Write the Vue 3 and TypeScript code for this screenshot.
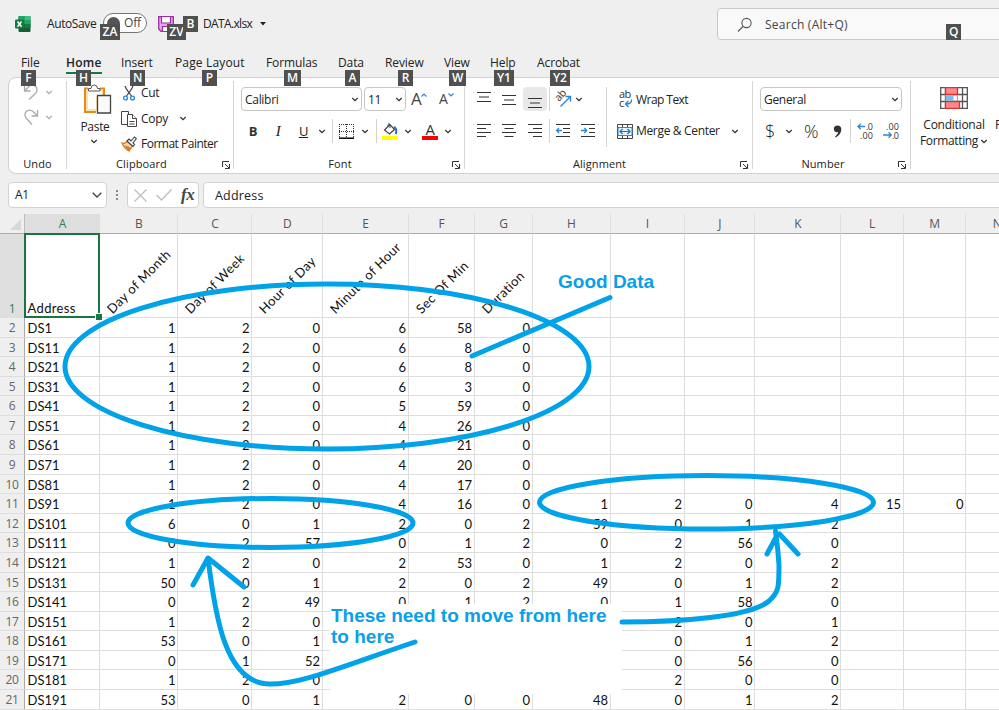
<script setup lang="ts">
interface Tab { name: string; key: string; keyLeft: number }
const tabs: Tab[] = [
  { name: 'File', key: 'F', keyLeft: 0 },
  { name: 'Home', key: 'H', keyLeft: 10 },
  { name: 'Insert', key: 'N', keyLeft: 9 },
  { name: 'Page Layout', key: 'P', keyLeft: 27 },
  { name: 'Formulas', key: 'M', keyLeft: 18 },
  { name: 'Data', key: 'A', keyLeft: 7 },
  { name: 'Review', key: 'R', keyLeft: 13 },
  { name: 'View', key: 'W', keyLeft: 5 },
  { name: 'Help', key: 'Y1', keyLeft: 4 },
  { name: 'Acrobat', key: 'Y2', keyLeft: 13 },
]
const columns: string[] = 'ABCDEFGHIJKLMN'.split('')
const headings: string[] = ['Address', 'Day of Month', 'Day of Week', 'Hour of Day', 'Minute of Hour', 'Sec Of Min', 'Duration']
const rows: string[][] = [
  'DS1 1 2 0 6 58 0', 'DS11 1 2 0 6 8 0', 'DS21 1 2 0 6 8 0', 'DS31 1 2 0 6 3 0',
  'DS41 1 2 0 5 59 0', 'DS51 1 2 0 4 26 0', 'DS61 1 2 0 4 21 0', 'DS71 1 2 0 4 20 0',
  'DS81 1 2 0 4 17 0', 'DS91 1 2 0 4 16 0 1 2 0 4 15 0', 'DS101 6 0 1 2 0 2 59 0 1 2',
  'DS111 0 2 57 0 1 2 0 2 56 0', 'DS121 1 2 0 2 53 0 1 2 0 2', 'DS131 50 0 1 2 0 2 49 0 1 2',
  'DS141 0 2 49 0 1 2 0 1 58 0', 'DS151 1 2 0 - - - - 2 0 1', 'DS161 53 0 1 - - - - 0 1 2',
  'DS171 0 1 52 - - - - 0 56 0', 'DS181 1 2 0 - - - - 2 0 0', 'DS191 53 0 1 2 0 0 48 0 1 2',
].map((line) => line.split(' ').map((v) => (v === '-' ? '' : v)))
</script>

<template>
  <div class="window">
    <header class="title">
      <svg class="logo" width="16" height="16" viewBox="0 0 16 16">
        <rect x="3.5" y="0" width="12" height="16" rx="1" fill="#185c37" />
        <path d="M4.500 0H9.500V8H3.500V1Q3.500 0 4.500 0Z" fill="#21a366" /><path d="M9.500 0H14.500Q15.500 0 15.500 1V4H9.500Z" fill="#33c481" />
        <path d="M9.500 4H15.500V8H9.500Z" fill="#21a366" /><path d="M3.500 8H9.500V12H3.500Z" fill="#107c41" /><path d="M9.500 8H15.500V12H9.500Z" fill="#107c41" />
        <rect x="0" y="3.500" width="9" height="9" rx="1" fill="#107c41" />
        <path d="M2.500 5.500L6.500 10.800M6.500 5.500L2.500 10.800" stroke="#fff" stroke-width="1.500" />
      </svg>
      <span class="autosave">AutoSave</span>
      <span class="toggle"><i></i><b>Off</b><kbd class="key za">ZA</kbd></span>
      <span class="save">
        <svg width="16" height="16" viewBox="0 0 16 16"><path d="M.7.700H15.300V15.300H3L.7 13Z" fill="#e6a8ec" stroke="#9a2ca8" stroke-width="1.300" /><path d="M3.500 1V7H12.500V1" fill="#fff" stroke="#9a2ca8" stroke-width="1.200" /><path d="M4.500 15V10.500H11.500V15" fill="#fff" stroke="#9a2ca8" stroke-width="1.200" /></svg>
        <kbd class="key zv">ZV</kbd><kbd class="key kb">B</kbd>
      </span>
      <span class="file">DATA.xlsx</span>
      <svg class="tri" width="6" height="4" viewBox="0 0 6 4"><path d="M0 0H6L3 3.500Z" fill="#222" /></svg>
      <div class="search">
        <svg width="16" height="16" viewBox="0 0 16 16" fill="none" stroke="#555" stroke-width="1.100"><circle cx="9.500" cy="6" r="4.600" /><path d="M6 9.500L1 14.500" /></svg>
        <span>Search (Alt+Q)</span><kbd class="key kq">Q</kbd>
      </div>
    </header>

    <nav class="tabs">
      <span v-for="t in tabs" :key="t.name" :class="{ active: t.name === 'Home', wide: t.name === 'Page Layout' }"><em>{{ t.name }}</em><kbd class="key" :style="{ left: t.keyLeft + 'px' }">{{ t.key }}</kbd></span>
    </nav>

    <section class="ribbon">
      <div class="group undo">
        <div class="undo-body">
          <svg width="16" height="16" viewBox="0 0 16 16" class="dim"><path d="M1.500 1V7H7.500M1.500 7L5 3.500C8-.5 14 1 14 6C14 8 13 9 12 10L6 15.500" /></svg><svg class="chev dim" width="8" height="5" viewBox="0 0 8 5"><path d="M1.300 1L4 3.600L6.700 1" /></svg>
          <svg width="16" height="16" viewBox="0 0 16 16" class="dim"><path d="M14.500 1V7H8.500M14.500 7L11 3.500C8-.5 2 1 2 6C2 8 3 9 4 10L9 15.500" /></svg><svg class="chev dim" width="8" height="5" viewBox="0 0 8 5"><path d="M1.300 1L4 3.600L6.700 1" /></svg>
        </div>
        <label>Undo</label>
      </div>

      <div class="group clipboard">
        <div class="clip-body">
          <div class="paste">
            <svg width="29" height="31" viewBox="0 0 29 31"><path d="M5 4.500H2V28H13" fill="none" stroke="#e8891c" stroke-width="2" /><path d="M3 6H21V13H14V27H3Z" fill="#fde2a8" /><path d="M5 7H19V12H13V25H5Z" fill="#fff" /><path d="M17 4.500H21V11" fill="none" stroke="#e8891c" stroke-width="2" /><path d="M5.500 7V4.500H8Q8 1 11.200 1T14.500 4.500H17V7Z" fill="#fff" stroke="#555" /><path d="M14.500 11.500H27.500V29H14.500Z" fill="#fafafa" stroke="#444" stroke-width="1.300" /></svg>
            <span>Paste</span>
            <svg class="chev" width="8" height="5" viewBox="0 0 8 5"><path d="M1.300 1L4 3.600L6.700 1" /></svg>
          </div>
          <div class="clip-list">
            <div><svg width="16" height="16" viewBox="0 0 16 16" fill="none"><path d="M4 1Q5 4 10.500 11M12 1Q11 4 5.500 11" stroke="#444" stroke-width="1.200" /><circle cx="4.500" cy="13" r="1.900" stroke="#2b88d8" stroke-width="1.400" /><circle cx="11.500" cy="13" r="1.900" stroke="#2b88d8" stroke-width="1.400" /></svg><span>Cut</span></div>
            <div><svg width="16" height="16" viewBox="0 0 16 16" fill="#fff" stroke="#444"><path d="M6 13.500H.5V.5H7.500V3" /><path d="M6.500 3.500H11.500L15.500 7.500V15.500H6.500Z" /><path d="M11.500 3.500V7.500H15.500M8.500 10.500H13.500M8.500 13H13.500" /></svg><span>Copy</span><svg class="chev" width="8" height="5" viewBox="0 0 8 5"><path d="M1.300 1L4 3.600L6.700 1" /></svg></div>
            <div><svg width="16" height="16" viewBox="0 0 16 16"><path d="M1 7Q4 8 6 5.500L11.500 10Q9 13 8 15Q3 12 1 7Z" fill="#fcd9b6" stroke="#e07a1a" stroke-width="1.300" /><path d="M3 9Q7 10 10 12L8 15Z" fill="#e07a1a" /><path d="M6 5L8 3L10 5L13.500 1L15.300 2.500L12 7L13.500 8.500L12 10.500Z" fill="#fff" stroke="#444" stroke-width="1.100" /></svg><span>Format Painter</span></div>
          </div>
        </div>
        <label>Clipboard</label>
        <svg class="launch" width="8" height="8" viewBox="0 0 8 8"><path d="M.5 6V.5H7M3 3L7 7M7.500 3V7.500H3" /></svg>
      </div>

      <div class="group font">
        <div class="font-one">
          <div class="box">Calibri<svg class="chev" width="8" height="5" viewBox="0 0 8 5"><path d="M1.300 1L4 3.600L6.700 1" /></svg></div>
          <div class="box">11<svg class="chev" width="8" height="5" viewBox="0 0 8 5"><path d="M1.300 1L4 3.600L6.700 1" /></svg></div>
          <span class="grow">A<svg width="6" height="4" viewBox="0 0 6 4"><path d="M.5 3.500L3 1L5.500 3.500" fill="none" stroke="#2b88d8" stroke-width="1.200" /></svg></span>
          <span class="grow small">A<svg width="6" height="4" viewBox="0 0 6 4"><path d="M.5.500L3 3L5.500.500" fill="none" stroke="#2b88d8" stroke-width="1.200" /></svg></span>
        </div>
        <div class="font-two">
          <b>B</b><i>I</i><u>U</u>
          <svg class="chev" width="8" height="5" viewBox="0 0 8 5"><path d="M1.300 1L4 3.600L6.700 1" /></svg>
          <s class="bar"></s>
          <svg width="16" height="16" viewBox="0 0 16 16"><path d="M1 1.500H16M1 8.500H16M1.500 1V14M8.500 1V14M15.500 1V14" stroke="#333" stroke-dasharray="1 1" /><path d="M1 15.200H16" stroke="#000" stroke-width="1.500" /></svg>
          <svg class="chev" width="8" height="5" viewBox="0 0 8 5"><path d="M1.300 1L4 3.600L6.700 1" /></svg>
          <s class="bar"></s>
          <svg width="16" height="17" viewBox="0 0 16 17"><path d="M2.500 7L8 1.500L12.500 6.500L7.500 11Z" fill="#fff" stroke="#444" stroke-width="1.200" /><path d="M6 4V1.500Q7-.3 8 1.500V5" fill="none" stroke="#444" /><path d="M12 4Q15 5 14 11" fill="none" stroke="#1c73c4" stroke-width="2" /><path d="M0 13H16V17H0Z" fill="#ff0" /></svg>
          <svg class="chev" width="8" height="5" viewBox="0 0 8 5"><path d="M1.300 1L4 3.600L6.700 1" /></svg>
          <span class="color">A</span>
          <svg class="chev" width="8" height="5" viewBox="0 0 8 5"><path d="M1.300 1L4 3.600L6.700 1" /></svg>
        </div>
        <label>Font</label>
        <svg class="launch" width="8" height="8" viewBox="0 0 8 8"><path d="M.5 6V.5H7M3 3L7 7M7.500 3V7.500H3" /></svg>
      </div>

      <div class="group align">
        <div class="align-body">
          <div class="align-icons">
            <svg class="lines" width="14" height="15" viewBox="0 0 14 15"><path d="M0 .5H14M2 5H12M0 9.500H14" /></svg>
            <svg class="lines" width="14" height="15" viewBox="0 0 14 15"><path d="M0 3.500H14M2 8H12M0 12.500H14" /></svg>
            <span class="pressed"><svg class="lines" width="14" height="15" viewBox="0 0 14 15"><path d="M0 6.500H14M2 11H12M0 15.500H14" /></svg></span>
            <s class="bar"></s>
            <svg width="17" height="17" viewBox="0 0 17 17"><text x="0" y="0" transform="translate(4 11) rotate(-48)" font-size="10.500" fill="#333">ab</text><path d="M5.500 15.500L15 6M10.500 5.500H15.500V10.500" fill="none" stroke="#2b88d8" stroke-width="1.400" /></svg>
            <svg class="chev orient" width="8" height="5" viewBox="0 0 8 5"><path d="M1.300 1L4 3.600L6.700 1" /></svg>
            <svg class="lines" width="14" height="14" viewBox="0 0 14 14"><path d="M0 .5H14M0 4.500H9M0 8.500H14M0 12.500H9" /></svg>
            <svg class="lines" width="14" height="14" viewBox="0 0 14 14"><path d="M0 .5H14M2.500 4.500H11.500M0 8.500H14M2.500 12.500H11.500" /></svg>
            <svg class="lines" width="14" height="14" viewBox="0 0 14 14"><path d="M0 .5H14M5 4.500H14M0 8.500H14M5 12.500H14" /></svg>
            <s class="bar"></s>
            <svg class="lines" width="14" height="14" viewBox="0 0 14 14"><path d="M0 .5H14M7 4.500H14M7 8.500H14M0 12.500H14" /><path class="blue" d="M6 6.500H.7M3 4L.6 6.500L3 9" /></svg>
            <svg class="lines" width="14" height="14" viewBox="0 0 14 14"><path d="M0 .5H14M8 4.500H14M8 8.500H14M0 12.500H14" /><path class="blue" d="M0 6.500H5.500M3.300 4L5.700 6.500L3.300 9" /></svg>
          </div>
          <div class="align-text">
            <div><svg width="16" height="18" viewBox="0 0 16 18"><text x="2" y="7" font-size="11" fill="#333">ab</text><text x="2" y="15.500" font-size="11" fill="#333">c</text><path d="M14.500 8.500Q15 13 9 13M11.500 10L8.500 13L11.500 16" fill="none" stroke="#2b88d8" stroke-width="1.400" /></svg><span>Wrap Text</span></div>
            <div><svg width="16" height="15" viewBox="0 0 16 15"><path d="M.5.500H15.500V14.500H.5ZM5.500.500V3M10.500.500V3M5.500 12V14.500M10.500 12V14.500" fill="#fff" stroke="#444" /><path d="M1 3.500H15V11.500H1Z" fill="#e2f1fb" stroke="#2b88d8" /><path d="M3 7.500H13M5.500 5L3 7.500L5.500 10M10.500 5L13 7.500L10.500 10" fill="none" stroke="#1c73c4" stroke-width="1.200" /></svg><span>Merge &amp; Center</span><svg class="chev" width="8" height="5" viewBox="0 0 8 5"><path d="M1.300 1L4 3.600L6.700 1" /></svg></div>
          </div>
        </div>
        <label>Alignment</label>
        <svg class="launch" width="8" height="8" viewBox="0 0 8 8"><path d="M.5 6V.5H7M3 3L7 7M7.500 3V7.500H3" /></svg>
      </div>

      <div class="group number">
        <div class="num-one"><div class="box">General<svg class="chev" width="8" height="5" viewBox="0 0 8 5"><path d="M1.300 1L4 3.600L6.700 1" /></svg></div></div>
        <div class="num-two">
          <span class="sym">$</span>
          <svg class="chev" width="8" height="5" viewBox="0 0 8 5"><path d="M1.300 1L4 3.600L6.700 1" /></svg>
          <span class="sym">%</span>
          <svg width="9" height="13" viewBox="0 0 9 13"><path d="M4.200.5Q8.300.500 8.300 4.500Q8 10 2.500 12.500L2 11.700Q5 9.500 5.300 7Q1 7.800.8 4Q1 .5 4.200.5Z" fill="#333" /></svg>
          <s class="bar"></s>
          <svg class="dec" width="16" height="16" viewBox="0 0 16 16"><text x="9" y="7" textLength="7">.0</text><text x="3" y="15.500" textLength="13">.00</text><path d="M8 3.500H1M3.700.800L1 3.500L3.700 6.200" /></svg>
          <svg class="dec" width="16" height="16" viewBox="0 0 16 16"><text x="3" y="7" textLength="13">.00</text><text x="9" y="15.500" textLength="7">.0</text><path d="M0 12H8M5.500 9.300L8.200 12L5.500 14.700" /></svg>
        </div>
        <label>Number</label>
        <svg class="launch" width="8" height="8" viewBox="0 0 8 8"><path d="M.5 6V.5H7M3 3L7 7M7.500 3V7.500H3" /></svg>
      </div>

      <div class="styles">
        <div class="cond">
          <svg width="28" height="22" viewBox="0 0 28 22"><path d="M.7.700H27.300V21.300H.7ZM.7 7.500H27M.7 14.500H27M5.500.700V21M22.500.700V21" fill="#fff" stroke="#555" stroke-width="1.300" /><path d="M5.500.700H17.500V7.500H5.500ZM5.500 14.500H19.500V21.300H5.500Z" fill="#ff8a8a" stroke="#e03030" stroke-width="1.300" /><path d="M5.500 8H13.500V14H5.500Z" fill="#7fbcf0" /><path d="M17.500 8V14" stroke="#e88" /></svg>
          <span>Conditional</span>
          <span class="fmt">Formatting<svg class="chev" width="8" height="5" viewBox="0 0 8 5"><path d="M1.300 1L4 3.600L6.700 1" /></svg></span>
        </div>
        <span class="cut-off">Format as</span>
      </div>
    </section>

    <section class="formula">
      <div class="namebox">A1<svg width="10" height="6" viewBox="0 0 10 6"><path d="M.7.700L5 5L9.300.700" fill="none" stroke="#444" stroke-width="1.300" /></svg></div>
      <div class="dots"><i></i><i></i><i></i></div>
      <div class="fx">
        <svg width="13" height="13" viewBox="0 0 13 13"><path d="M.5.500L12.500 12.500M12.500.500L.5 12.500" /></svg>
        <svg width="16" height="12" viewBox="0 0 16 12"><path d="M.5 6L5.500 11L15.500.500" /></svg>
        <em>fx</em>
      </div>
      <div class="content">Address</div>
    </section>

    <main class="sheet">
      <div class="heads cols">
        <span class="corner"><svg width="11" height="11" viewBox="0 0 11 11"><path d="M11 0V11H0Z" fill="#d8d8d8" /></svg></span>
        <span v-for="c in columns" :key="c" :class="{ on: c === 'A' }">{{ c }}</span>
      </div>
      <div class="first cols">
        <span class="rownum on">1</span>
        <span v-for="(c, i) in columns" :key="c" :class="{ selected: i === 0 }"><b v-if="headings[i]" :class="{ slant: i > 0 }">{{ headings[i] }}</b></span>
      </div>
      <div v-for="(r, n) in rows" :key="n" class="line cols">
        <span class="rownum">{{ n + 2 }}</span>
        <span v-for="(c, i) in columns" :key="c">{{ r[i] }}</span>
      </div>

      <div class="note"><p>These need to move from here</p><p>to here</p></div>
      <div class="good">Good Data</div>
      <svg class="ink" width="999" height="710" viewBox="0 0 999 710">
        <ellipse cx="327" cy="366.500" rx="262" ry="82.500" />
        <ellipse cx="270.500" cy="523" rx="142.500" ry="24.500" />
        <ellipse cx="706.500" cy="502.300" rx="167" ry="26.700" />
        <path d="M472 356L610 297.500" />
        <path d="M193 585L208 558L244 587M208 558C215 615 225 684 270 684C302 684 340 667 415 642" />
        <path d="M622 622C680 622 750 617 769 601C779 592 779 587 779 565Q778 548 775.500 531M767 554L777 535.500M779.500 534L798 554" />
      </svg>
    </main>
  </div>
</template>

<style>
body { margin: 0; overflow: hidden; }
</style>

<style scoped>
.window { position: relative; width: 999px; height: 710px; overflow: hidden; background: #efefef; font: 12px/16px "Open Sans", "Noto Sans", sans-serif; letter-spacing: -.3px; color: #222; display: flex; flex-direction: column; }
.window * { box-sizing: border-box; }
svg { display: block; flex: none; overflow: visible; }
em { font-style: normal; }
.key { position: absolute; height: 16px; min-width: 15px; padding: 0 3px; background: #505050; color: #fff; font: 600 12px/16px "Open Sans", sans-serif; text-align: center; letter-spacing: 0; z-index: 3; }
.chev { fill: none; stroke: #333; stroke-width: 1.300; }
.dim { fill: none; stroke: #aaa; stroke-width: 1.300; }
.title { height: 48px; flex: none; display: flex; align-items: center; padding-left: 15px; white-space: nowrap; }
.logo { margin-top: -1px; }
.autosave { width: 56px; margin-left: 16px; letter-spacing: -.4px; }
.toggle { position: relative; width: 44px; height: 20px; margin: -2px 1px 0 0; border: 1px solid #777; border-radius: 10px; background: #fff; display: flex; align-items: center; padding-left: 3px; }
.toggle i { width: 13px; height: 13px; border-radius: 50%; background: #555; }
.toggle b { font-weight: 400; margin-left: 4px; color: #444; letter-spacing: -.2px; }
.za { left: -4px; top: 10px; width: 20px; padding: 0; }
.save { position: relative; margin: -1px 0 0 10px; width: 45px; }
.zv { left: 9px; top: 8px; width: 19px; padding: 0; }
.kb { left: 25px; top: 0; }
.file { width: 58px; letter-spacing: -.65px; }
.tri { margin-left: -1px; }
.search { position: relative; margin-left: auto; width: 283px; height: 32px; margin-right: -1px; border: 1px solid #c8c8c8; border-radius: 4px 0 0 4px; background: #f9f9f9; display: flex; align-items: center; padding: 1px 0 0 19px; gap: 12px; color: #444; letter-spacing: .25px; }
.kq { left: 228px; top: 15px; }
.tabs { height: 29px; flex: none; display: grid; grid-template-columns: 45px 55px 54px 91px 72px 47px 59px 46px 47px 60px; padding: 7px 0 0 21px; white-space: nowrap; }
.tabs span { position: relative; }
.tabs em { display: inline-block; height: 19px; letter-spacing: -.1px; }
.tabs .wide em { letter-spacing: .15px; }
.tabs .key { top: 15px; }
.tabs .active em { font-weight: 600; border-bottom: 2px solid #107c41; letter-spacing: .2px; }
.ribbon { margin-left: 8px; height: 97px; flex: none; width: 1010px; border: 1px solid #d0d0d0; border-radius: 8px; background: #fff; display: flex; padding-top: 3px; }
.group { position: relative; height: 88px; border-right: 1px solid #d6d6d6; flex: none; }
.group label { position: absolute; left: 0; right: 0; bottom: -3px; text-align: center; font-size: 11px; letter-spacing: .1px; }
.launch { position: absolute; right: 4px; bottom: 0; fill: none; stroke: #333; }
.undo { width: 58px; }
.undo-body { padding: 3px 0 0 14px; display: grid; grid-template-columns: 22px 10px; row-gap: 9px; align-items: center; }
.clipboard { width: 167px; }
.clipboard label { right: 17px; }
.clipboard .launch { right: 3px; }
.clip-body { display: flex; padding: 3px 0 0 15px; }
.paste { width: 31px; display: flex; flex-direction: column; align-items: center; }
.paste span { margin: 4px 0 4px -5px; letter-spacing: -.3px; }
.paste .chev { margin-left: -7px; }
.clip-list { margin-left: 8px; width: 105px; }
.clip-list div { height: 25px; display: flex; align-items: center; gap: 4px; white-space: nowrap; }
.clip-list div:first-child { height: 18px; margin-bottom: 4px; }
.clip-list .chev { margin-left: 7px; }
.clip-list div:last-child span { letter-spacing: -.5px; }
.font { width: 231px; padding-left: 7px; }
.font label { right: 18px; }
.font-one { display: grid; grid-template-columns: 121px 42px 24px 24px; column-gap: 2px; padding-top: 6px; height: 30px; margin: 0 -20px 0 0; }
.box { height: 24px; border: 1px solid #c6c6c6; border-radius: 4px; display: flex; align-items: center; justify-content: space-between; padding: 1px 2px 0 3px; letter-spacing: -.3px; }
.grow { font-size: 17px; line-height: 24px; display: flex; padding-left: 3px; color: #444; }
.grow svg { margin-top: 6px; }
.grow.small { font-size: 14px; padding-left: 5px; }
.font-two { height: 28px; margin: 6px 0 0 -1px; display: grid; grid-template-columns: 26px 24px 27px 10px 11px 16px 21px 2px 26px 10px 34px 2px; justify-items: center; align-items: center; font-size: 13px; }
.font-two i { font-family: "Liberation Serif", serif; font-size: 15px; }
.font-two b { color: #333; }
.bar { width: 1px; height: 24px; background: #d2d2d2; }
.color { font-size: 15px; line-height: 13px; width: 16px; height: 17px; border-bottom: 4px solid #f00; text-align: center; color: #333; }
.align { width: 288px; }
.align label { right: 18px; }
.align-body { display: flex; padding-top: 6px; }
.align-icons { width: 142px; height: 60px; border-right: 1px solid #d6d6d6; padding-left: 6px; display: grid; grid-template-columns: 26px 24px 27px 3px 24px 26px; grid-template-rows: 24px 24px; row-gap: 8px; justify-items: center; align-items: center; }
.lines { fill: none; stroke: #333; stroke-width: 1; }
.lines .blue { stroke: #2b88d8; stroke-width: 1.300; }
.orient { margin-left: -18px; }
.pressed { width: 24px; height: 24px; background: #e8e8e8; border-radius: 4px; display: grid; place-content: center; }
.align-text div { height: 24px; margin-bottom: 8px; display: flex; align-items: center; gap: 3px; padding-left: 10px; white-space: nowrap; letter-spacing: -.33px; }
.align-text div:first-child { padding-top: 2px; letter-spacing: -.55px; }
.align-text .chev { margin-left: 8px; }
.number { width: 158px; }
.number label { right: 17px; }
.num-one { padding: 6px 8px 0 7px; height: 30px; }
.num-two { height: 28px; margin: 6px 0 0 -1px; display: grid; grid-template-columns: 36px 2px 42px 10px 17px 12px 40px; justify-items: center; align-items: center; }
.sym { font-size: 18px; font-weight: 300; color: #222; }
.dec { font-size: 9px; fill: #333; letter-spacing: 0; }
.dec path { fill: none; stroke: #2b88d8; stroke-width: 1.300; }
.styles { display: flex; padding: 6px 0 0 10px; }
.cond { width: 66px; display: flex; flex-direction: column; align-items: center; white-space: nowrap; letter-spacing: -.25px; }
.cond > svg { margin-bottom: 8px; }
.fmt { display: flex; align-items: center; gap: 2px; letter-spacing: -.35px; }
.cut-off { margin: 30px 0 0 8px; white-space: nowrap; }
.formula { height: 40px; flex: none; padding: 8px 0 0 8px; display: flex; }
.formula > div { height: 26px; flex: none; }
.namebox, .fx, .content { background: #fff; border: 1px solid #d2d2d2; border-radius: 4px; display: flex; align-items: center; }
.namebox { width: 99px; padding: 0 4px 0 6px; justify-content: space-between; }
.dots { width: 20px; display: flex; flex-direction: column; align-items: center; justify-content: center; gap: 2px; }
.dots i { width: 2px; height: 2px; background: #888; }
.fx { width: 72px; padding-left: 6px; gap: 9px; fill: none; stroke: #bdbdbd; stroke-width: 1.300; }
.fx em { font: italic 700 17px/20px "Liberation Serif", serif; color: #444; }
.content { margin-left: 4px; width: 810px; padding: 1px 0 0 11px; letter-spacing: .2px; font-size: 12.500px; }
.sheet { flex: none; font: 13px/19px Lato, "Open Sans", sans-serif; letter-spacing: 0; color: #111; }
.cols { display: grid; grid-template-rows: 100%; grid-template-columns: 25px 75px 78px 74px 70.500px 86px 66px 58px 78px 74px 70.500px 86px 62.500px 62.500px 62.500px; width: 1030px; }
.cols > span { border-right: 1px solid #dedede; border-bottom: 1px solid #dedede; min-height: 0; }
.heads { height: 20px; background: #efefef; }
.heads > span { text-align: center; color: #555; font: 12px/20px "Open Sans", sans-serif; border-bottom-color: #ababab; padding-left: 1px; }
.heads > .corner { border-right-color: #bbb; display: flex; justify-content: flex-end; align-items: flex-end; padding: 0 3px 3px 0; }
.heads > .on { background: #dedede; color: #2b8058; }
.first { height: 84px; background: #fff; }
.first > span { position: relative; }
.first b { font-weight: 400; position: absolute; left: 2.500px; bottom: -1px; white-space: nowrap; letter-spacing: .35px; }
.first .slant { left: 16px; bottom: -1px; transform: rotate(-45deg); transform-origin: 0 100%; letter-spacing: .4px; }
.first > .selected { box-shadow: 0 0 0 1px #1b7444, inset 0 0 0 1px #1b7444; z-index: 1; border: 0; margin: 0 1px 1px 0; }
.selected::after { content: ""; position: absolute; right: -3px; bottom: -3px; width: 6px; height: 6px; background: #1b7444; border: 1px solid #fff; border-width: 1px 0 0 1px; }
.line { height: 19.580px; background: #fff; }
.line > span { text-align: right; padding: 1px 1.500px 0 0; line-height: 19px; }
.line > span:nth-child(2) { text-align: left; padding-left: 2.500px; }
.cols > .rownum { background: #efefef; color: #666; text-align: center; font: 12px/20px "Open Sans", sans-serif; padding: 0; border-right-color: #aaa; letter-spacing: -.3px; }
.cols > .rownum.on { background: #dedede; color: #2b8058; padding-top: 65px; }
.note { position: absolute; left: 330px; top: 604px; width: 292px; height: 90px; background: #fff; color: #0aa0e8; font: 700 19px/21px "Liberation Sans", Arial, sans-serif; padding: 1px 0 0 1px; white-space: nowrap; }
.note p { margin: 0; }
.good { position: absolute; left: 558px; top: 271px; color: #0aa0e8; font: 700 19px/22px "Liberation Sans", Arial, sans-serif; }
.ink { position: absolute; left: 0; top: 0; fill: none; stroke: #00a2e8; stroke-width: 5; stroke-linecap: round; stroke-linejoin: round; z-index: 4; }
</style>
